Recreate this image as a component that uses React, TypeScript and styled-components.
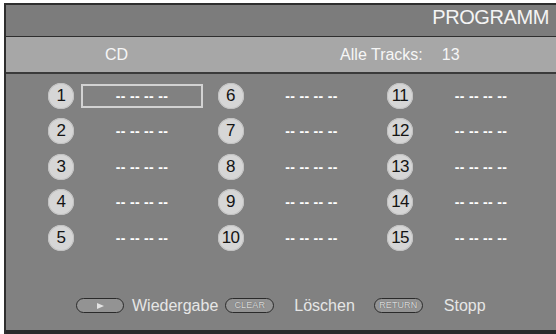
import React, { FC } from 'react';
import styled, { createGlobalStyle } from 'styled-components';

const GlobalStyle = createGlobalStyle`
  html, body {
    margin: 0;
    padding: 0;
    background: #ffffff;
  }

  body {
    font-family: "Liberation Sans", Arial, sans-serif;
    overflow: hidden;
  }
`;

const Page = styled.div`
  width: 556px;
  height: 334px;
  padding: 3px 0 0 4px;
  box-sizing: border-box;
`;

const Frame = styled.div`
  height: 100%;
  display: flex;
  flex-direction: column;

  border-left: 2px solid #2e2e2e;
  border-top: 2px solid #2e2e2e;
  box-sizing: border-box;
`;

const Header = styled.div`
  height: 31px;
  padding-right: 7px;

  display: flex;
  align-items: center;
  justify-content: flex-end;

  background: #7c7c7c;
  border-bottom: 1px solid #2e2e2e;

  color: #f4f4f4;
  font-size: 20px;
  letter-spacing: -0.4px;
`;

const HeaderTitle = styled.span`
  margin-top: -6px;
`;

const SubHeader = styled.div`
  height: 35px;

  display: flex;
  align-items: center;

  background: #a7a7a7;
  border-bottom: 2px solid #3a3a3a;

  color: #f6f6f6;
  font-size: 16px;
`;

const SubText = styled.span<{ $left: number }>`
  margin-left: ${ p => p.$left }px;
`;

const Body = styled.div`
  flex: 1;
  padding: 4px 0 0 42px;

  display: flex;
  flex-direction: column;

  background: #818181;
  border-bottom: 4px solid #2a2a2a;
`;

const TrackGrid = styled.div`
  display: grid;
  grid-template-columns: repeat(3, 156px);
  grid-template-rows: repeat(5, 35.5px);
  grid-auto-flow: column;
  column-gap: 13.5px;
`;

const Track = styled.div`
  display: flex;
  align-items: center;
  gap: 7px;
`;

const TrackNo = styled.span`
  width: 26px;
  height: 26px;
  flex: none;

  display: flex;
  align-items: center;
  justify-content: center;

  background: #d6d6d6;
  border-radius: 50%;
  box-shadow: inset 0 0 0 1px #c2c2c2;

  color: #141414;
  font-size: 17px;
  letter-spacing: -0.6px;
`;

const Slot = styled.div<{ $selected: boolean }>`
  width: 122px;
  height: 24px;
  box-sizing: border-box;

  display: flex;
  align-items: center;
  justify-content: center;

  border: 2px solid ${ p => p.$selected ? '#d2d2d2' : 'transparent' };

  color: #ffffff;
  font-size: 14px;
  font-weight: bold;
  letter-spacing: 0.3px;
  white-space: pre;
`;

const Legend = styled.div`
  margin: 42px 0 0 28px;

  display: flex;
  align-items: center;

  color: #e6e6e6;
  font-size: 16px;
`;

const Key = styled.span<{ $width: number }>`
  width: ${ p => p.$width }px;
  height: 15px;
  box-sizing: border-box;

  display: inline-flex;
  align-items: center;
  justify-content: center;

  background: #939393;
  border: 1.5px solid #2a2a2a;
  border-radius: 8px;

  color: #dadada;
  font-size: 9px;
  letter-spacing: 0.1px;
  text-shadow: 0 0 1px #555;
`;

const PlayArrow = styled.span`
  width: 0;
  height: 0;
  margin-top: 2px;

  border-left: 7px solid #e4e4e4;
  border-top: 3px solid transparent;
  border-bottom: 3px solid transparent;
`;

const KeyLabel = styled.span<{ $before: number; $after: number }>`
  margin-left: ${ p => p.$before }px;
  margin-right: ${ p => p.$after }px;
  line-height: 15px;
`;

const tracks = Array.from({ length: 15 }, (_, i) => i + 1);

export const App: FC = () => {
	return (
		<>
			<GlobalStyle />
			<Page>
				<Frame>
					<Header>
						<HeaderTitle>PROGRAMM</HeaderTitle>
					</Header>
					<SubHeader>
						<SubText $left={ 99 }>CD</SubText>
						<SubText $left={ 212 }>Alle Tracks:</SubText>
						<SubText $left={ 19 }>13</SubText>
					</SubHeader>
					<Body>
						<TrackGrid>
							{ tracks.map(n => (
								<Track key={ n }>
									<TrackNo>{ n }</TrackNo>
									<Slot $selected={ n === 1 }>-- -- -- --</Slot>
								</Track>
							)) }
						</TrackGrid>
						<Legend>
							<Key $width={ 48 }><PlayArrow /></Key>
							<KeyLabel $before={ 8 } $after={ 7 }>Wiedergabe</KeyLabel>
							<Key $width={ 49 }>CLEAR</Key>
							<KeyLabel $before={ 20 } $after={ 19 }>Löschen</KeyLabel>
							<Key $width={ 49 }>RETURN</Key>
							<KeyLabel $before={ 21 } $after={ 0 }>Stopp</KeyLabel>
						</Legend>
					</Body>
				</Frame>
			</Page>
		</>
	);
};

export default App;
